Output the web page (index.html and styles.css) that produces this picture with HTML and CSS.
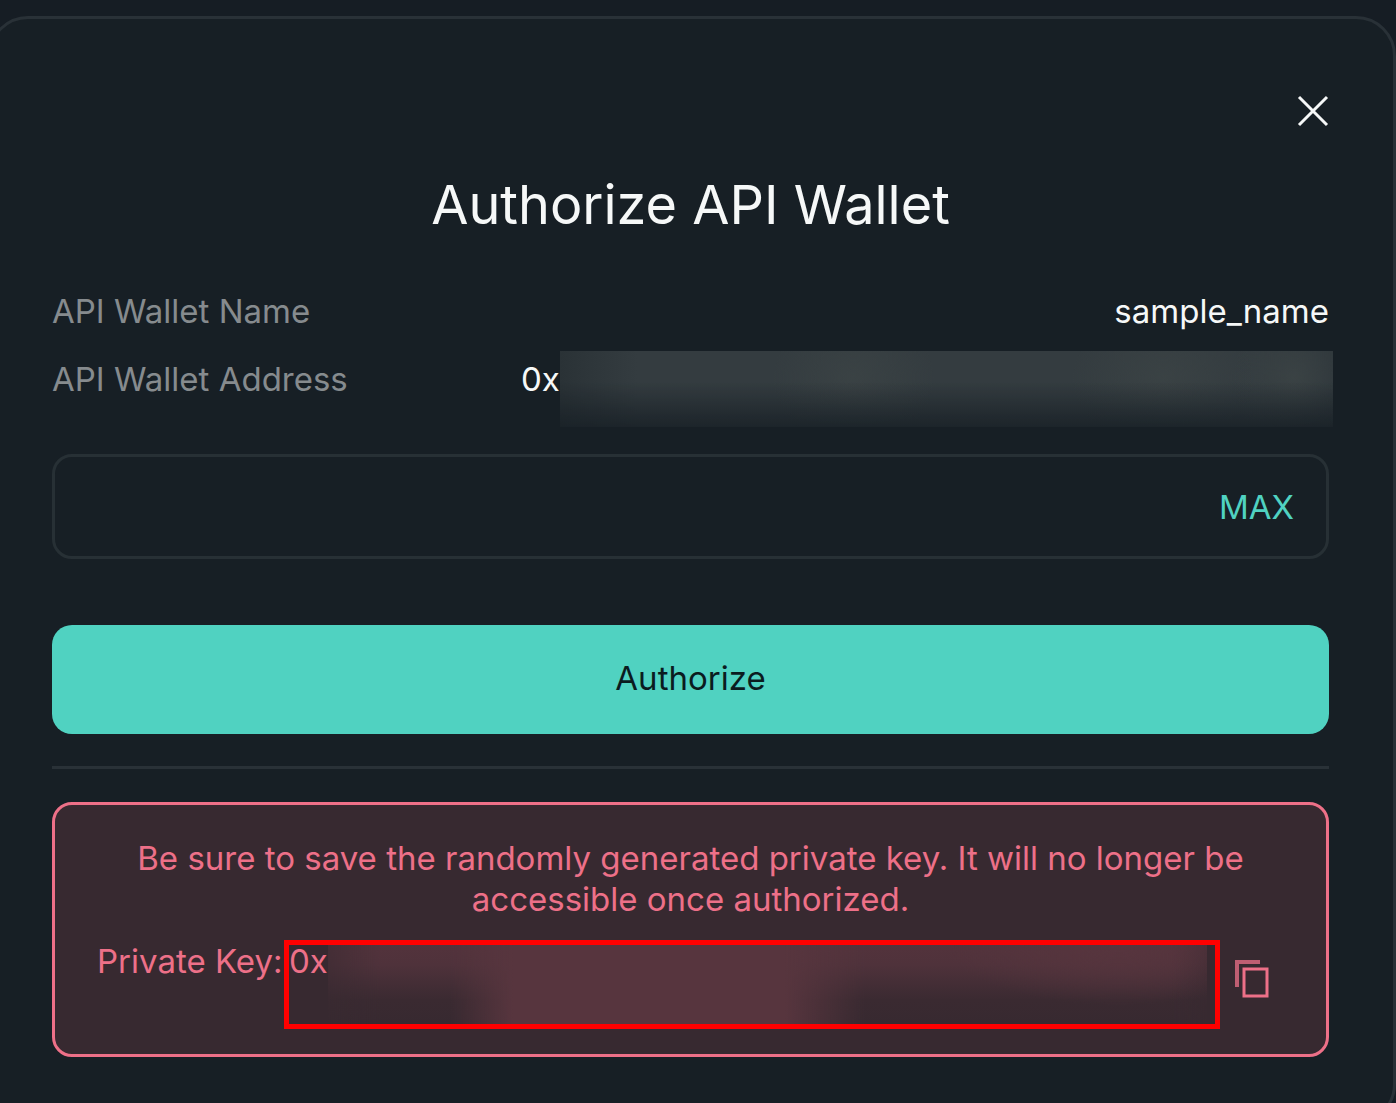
FILE: index.html
```html
<!DOCTYPE html>
<html lang="en">
<head>
<meta charset="utf-8">
<title>Authorize API Wallet</title>
<link rel="stylesheet" href="styles.css">
</head>
<body>
<main class="dialog" role="dialog" aria-labelledby="dialog-title">
  <header class="dialog-top">
    <button class="close" type="button" aria-label="Close">
      <svg class="close-icon" viewBox="0 0 32 32" aria-hidden="true"><path d="M2 2 30 30M30 2 2 30"/></svg>
    </button>
  </header>
  <h1 class="title" id="dialog-title">Authorize API Wallet</h1>
  <dl class="details">
    <div class="detail">
      <dt>API Wallet Name</dt>
      <dd>sample_name</dd>
    </div>
    <div class="detail">
      <dt>API Wallet Address</dt>
      <dd class="address">0x<span class="redacted redacted-address"></span></dd>
    </div>
  </dl>
  <div class="field">
    <input class="field-input" type="text" aria-label="Days valid">
    <button class="max" type="button">MAX</button>
  </div>
  <button class="authorize" type="button">Authorize</button>
  <hr class="divider">
  <section class="warning">
    <p class="warning-text">Be sure to save the randomly generated private key. It will no longer be accessible once authorized.</p>
    <div class="key-row">
      <span class="key-label">Private Key:</span>
      <div class="key-value">0x<span class="redacted redacted-key"></span></div>
      <button class="copy" type="button" aria-label="Copy private key">
        <svg class="copy-icon" viewBox="0 0 36 40" aria-hidden="true"><path class="copy-back" d="M3 28V3H26"/><path d="M10 10H33V37H10Z"/></svg>
      </button>
    </div>
  </section>
</main>
</body>
</html>
```
FILE: styles.css
```css
* {
  box-sizing: border-box;
}

body {
  margin: 0;
  height: 100vh;
  overflow: hidden;
  display: flow-root;
  background: #161d24;
  color: #f6f8f8;
  font: 400 33px/40px Inter, "Liberation Sans", sans-serif;
}

button {
  padding: 0;
  border: 0;
  background: none;
  color: inherit;
  font: inherit;
  cursor: pointer;
}

svg {
  display: block;
  fill: none;
  stroke: currentColor;
  stroke-width: 3;
}

.dialog {
  margin: 16px 0 0 -12px;
  padding: 76px 64px 64px 61px;
  border: 3px solid #293137;
  border-radius: 40px;
  background: #171f25;
}

.dialog-top {
  display: flex;
  justify-content: flex-end;
}

.close-icon {
  width: 32px;
  height: 32px;
}

.title {
  margin: 46px 0 54px;
  font-size: 54px;
  line-height: 64px;
  font-weight: 400;
  text-align: center;
}

.details {
  display: flex;
  flex-direction: column;
  gap: 28px;
  margin: 0 0 55px;
}

.detail {
  display: flex;
  justify-content: space-between;
  height: 40px;
}

.detail dt {
  color: #868b8e;
}

.detail dd {
  margin: 0;
}

.detail .address {
  display: flex;
  flex: 0 0 808px;
}

.redacted {
  flex: 1;
}

.redacted-address {
  height: 76px;
  margin: -8px -4px 0 0;
  background:
    linear-gradient(#171f2500 40%, #171f25d0),
    radial-gradient(80px 70px at 38% 35%, #3a4244, #3a424400),
    radial-gradient(90px 70px at 78% 35%, #3a4244, #3a424400),
    radial-gradient(60px 70px at 95% 35%, #3a4244, #3a424400),
    linear-gradient(90deg, #2a3236, #343c40 10%, #343c40 90%, #2d353a);
}

.field {
  display: flex;
  align-items: center;
  height: 105px;
  margin-bottom: 66px;
  padding-right: 32px;
  border: 3px solid #273035;
  border-radius: 20px;
}

.field-input {
  flex: 1;
  min-width: 0;
  height: 100%;
  padding: 0 32px;
  border: 0;
  outline: 0;
  background: none;
  color: inherit;
  font: inherit;
}

.max {
  color: #50d2c1;
}

.authorize {
  display: block;
  width: 100%;
  height: 109px;
  padding-bottom: 4px;
  border-radius: 20px;
  background: #50d2c1;
  color: #0b1c1f;
}

.divider {
  height: 3px;
  margin: 32px 0 33px;
  border: 0;
  background: #293137;
}

.warning {
  padding: 33px 56px 25px 42px;
  border: 3px solid #ed7088;
  border-radius: 20px;
  background: #372930;
  color: #ed7088;
}

.warning-text {
  margin: 0 -14px 20px 0;
  line-height: 41px;
  text-align: center;
}

.key-row {
  display: flex;
  align-items: flex-start;
  line-height: 32px;
}

.key-label {
  flex: 0 0 187px;
  padding-top: 5px;
}

.key-value {
  display: flex;
  flex: 1;
  height: 89px;
  padding-right: 8px;
  border: 5px solid #ff0000;
}

.redacted-key {
  background:
    linear-gradient(90deg, #57353e00 14%, #57353e 21%, #57353e 52%, #57353e00 61%),
    radial-gradient(170px 60px at 90% 0%, #57353e, #57353e00),
    linear-gradient(90deg, #37293080, #37293000 6%, #37293000 96%, #372930b0),
    linear-gradient(#53333c, #4f323b 25%, #3a2a31 70%, #372930);
}

.copy {
  margin: 19px 0 0 14px;
}

.copy-icon {
  width: 36px;
  height: 40px;
}

.copy-back {
  stroke-width: 4;
  opacity: 0.75;
}
```
